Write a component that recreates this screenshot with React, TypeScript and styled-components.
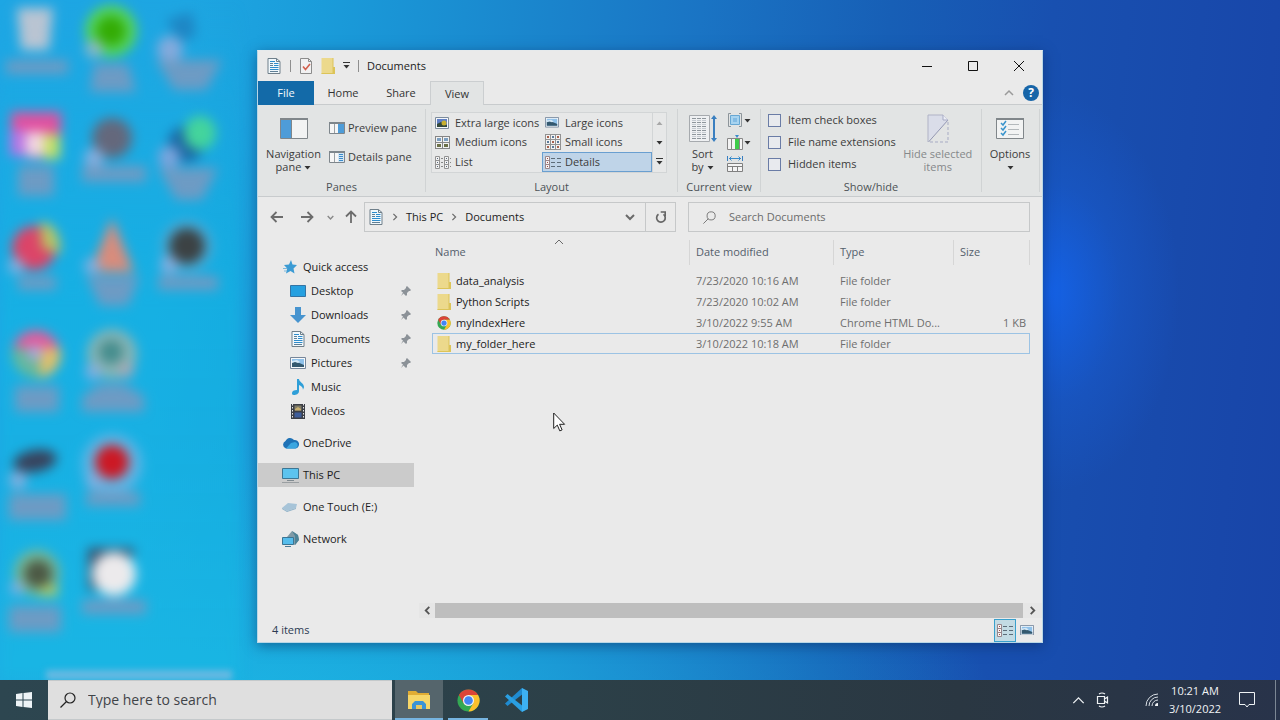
import React from "react";
import styled, { createGlobalStyle } from "styled-components";

const GlobalStyle = createGlobalStyle`
  * { box-sizing: border-box; }
  html, body { margin: 0; padding: 0; }
  body { font-family: "Open Sans", "Noto Sans", sans-serif; font-size: 11px; line-height: 16px; color: #1c1c1c; }
  button, input { font: inherit; color: inherit; margin: 0; padding: 0; border: 0; background: none; }
  svg { display: block; flex: none; }
`;

/* ---------- desktop ---------- */

const Page = styled.div`
  min-height: 100vh;
  display: flex;
  flex-direction: column;
`;

const Desktop = styled.main`
  position: relative;
  flex: 1;
  min-height: 640px;
  overflow: hidden;
  background:
    radial-gradient(ellipse 130px 200px at 82% 43%, rgba(20, 100, 236, 0.9), rgba(24, 96, 220, 0.35) 55%, rgba(28, 104, 232, 0) 100%),
    radial-gradient(ellipse 720px 300px at 22% 108%, rgba(28, 184, 228, 0.9), rgba(28, 184, 228, 0) 100%),
    linear-gradient(96deg, #1ea6e4 0%, #1ea6e2 14%, #1a9cda 24%, #1a88ce 38%, #1a74c4 52%, #175fb6 66%, #1850b0 78%, #1844a8 100%);
`;

const IconGrid = styled.div`
  position: absolute;
  top: 0;
  left: 0;
  bottom: 0;
  width: 240px;
  background: linear-gradient(180deg, rgba(16, 184, 228, 0) 0%, rgba(16, 184, 228, 0.55) 45%, rgba(24, 184, 228, 0.6) 100%);
  display: grid;
  grid-template-columns: repeat(3, 76px);
  grid-template-rows: repeat(6, 108px);
  grid-auto-flow: column;
  filter: blur(6px);
`;

const Strip = styled.div`
  position: absolute;
  left: 46px;
  width: 186px;
  bottom: 0;
  height: 10px;
  background: #66b9e2;
  filter: blur(3px);
`;

const BLUE_GREY = "#6d9bc4";
const BADGE = "#86aede";

function IconCell({ children }: { children?: React.ReactNode }) {
  return (
    <svg width="76" height="108" viewBox="0 0 76 108" aria-hidden="true">
      {children}
    </svg>
  );
}

function DesktopIcons() {
  return (
    <IconGrid>
      <IconCell>
        <path d="M17 8h36l-4 42H21z" fill="#b9c4d2" />
        <rect x="6" y="60" width="62" height="14" fill={BLUE_GREY} />
      </IconCell>
      <IconCell>
        <circle cx="36" cy="28" r="23" fill="#d060a0" />
        <rect x="11" y="4" width="50" height="24" fill="#e050a0" />
        <rect x="10" y="22" width="16" height="26" fill="#b874e4" />
        <rect x="26" y="24" width="20" height="24" fill="#f2d8e0" />
        <rect x="44" y="26" width="16" height="25" fill="#c4e064" />
        <rect x="18" y="58" width="36" height="30" fill={BLUE_GREY} />
      </IconCell>
      <IconCell>
        <circle cx="34" cy="32" r="22" fill="#dc4468" />
        <path d="M40 6c14 0 22 14 20 32l-18-6z" fill="#b8c464" />
        <circle cx="16" cy="50" r="8" fill={BADGE} />
        <rect x="18" y="60" width="38" height="14" fill={BLUE_GREY} />
      </IconCell>
      <IconCell>
        <circle cx="36" cy="30" r="24" fill="#66b89c" />
        <path d="M13 24a24 24 0 0 1 46 0z" fill="#e4589c" />
        <path d="M40 24h20a24 24 0 0 1-20 30z" fill="#e0c068" />
        <circle cx="35" cy="29" r="8" fill="#a8a8d8" />
        <rect x="15" y="62" width="44" height="26" fill={BLUE_GREY} />
      </IconCell>
      <IconCell>
        <ellipse cx="35" cy="29" rx="22" ry="11" fill="#38425c" transform="rotate(-10 35 29)" />
        <circle cx="18" cy="48" r="9" fill={BADGE} />
        <rect x="9" y="62" width="57" height="26" fill={BLUE_GREY} />
      </IconCell>
      <IconCell>
        <circle cx="37" cy="33" r="23" fill="#7ab894" />
        <circle cx="38" cy="34" r="14" fill="#4c5844" />
        <rect x="40" y="46" width="18" height="10" fill="#b0c864" />
        <circle cx="17" cy="48" r="7" fill={BADGE} />
        <rect x="9" y="66" width="52" height="26" fill={BLUE_GREY} />
      </IconCell>

      <IconCell>
        <circle cx="35" cy="31" r="26" fill="#54d45c" />
        <circle cx="35" cy="31" r="15" fill="#34ac04" />
        <circle cx="18" cy="49" r="9" fill="#8cb8c4" />
        <path d="M18 64h34l8 28H14z" fill={BLUE_GREY} />
      </IconCell>
      <IconCell>
        <circle cx="36" cy="30" r="20" fill="#64687c" />
        <circle cx="18" cy="50" r="10" fill={BADGE} />
        <rect x="6" y="58" width="64" height="16" fill={BLUE_GREY} />
      </IconCell>
      <IconCell>
        <path d="M36 2l22 54H14z" fill="#d88c7c" />
        <circle cx="16" cy="50" r="8" fill={BADGE} />
        <path d="M10 60h54l-12 30H24z" fill={BLUE_GREY} />
      </IconCell>
      <IconCell>
        <circle cx="36" cy="30" r="25" fill="#88b4b4" />
        <circle cx="35" cy="28" r="12" fill="#448c8c" />
        <circle cx="50" cy="46" r="8" fill="#a8a8b4" />
        <circle cx="17" cy="48" r="8" fill={BADGE} />
        <path d="M24 60h24l20 12v16H6V72z" fill={BLUE_GREY} />
      </IconCell>
      <IconCell>
        <circle cx="36" cy="32" r="30" fill="#60b4e4" />
        <circle cx="36" cy="30" r="17" fill="#cc1824" />
        <circle cx="18" cy="49" r="8" fill={BADGE} />
        <rect x="10" y="60" width="54" height="14" fill={BLUE_GREY} />
      </IconCell>
      <IconCell>
        <path d="M12 8h46v8H24v34H12z" fill="#38506c" />
        <circle cx="38" cy="34" r="22" fill="#eceaec" />
        <rect x="6" y="60" width="64" height="14" fill={BLUE_GREY} />
      </IconCell>

      <IconCell>
        <path d="M14 20l26-8 4 24-16 6z" fill="#1e86c4" />
        <circle cx="18" cy="49" r="13" fill="#84aadc" />
        <path d="M4 60h66l-16 30H22z" fill={BLUE_GREY} />
      </IconCell>
      <IconCell>
        <circle cx="34" cy="36" r="18" fill="#1c68a4" />
        <ellipse cx="48" cy="25" rx="16" ry="17" fill="#44d49c" />
        <circle cx="17" cy="49" r="11" fill="#7ca4dc" />
        <path d="M6 60h60l-16 32H24z" fill={BLUE_GREY} />
      </IconCell>
      <IconCell>
        <circle cx="35" cy="30" r="26" fill="#4cacd8" />
        <circle cx="35" cy="30" r="18" fill="#3c4244" />
        <circle cx="17" cy="49" r="9" fill={BADGE} />
        <rect x="6" y="60" width="60" height="14" fill={BLUE_GREY} />
      </IconCell>
    </IconGrid>
  );
}

/* ---------- icons ---------- */

const DocIcon = () => (
  <svg width="16" height="16" viewBox="0 0 16 16">
    <path d="M2 .5h8.500l3.500 3v12H2z" fill="#f1f8fc" stroke="#6f7f8a" />
    <path d="M10.500.5v3H14" fill="none" stroke="#6f7f8a" />
    <path d="M4 5.500h3M4 7.500h3M4 13.500h8" stroke="#5f7f96" />
    <path d="M8 5.500h4.500M8 7.500h4.500M4 9.500h8.500M4 11.500h8.500" stroke="#2e8ccc" />
    <path d="M4 3.500h5" stroke="#2e8ccc" />
  </svg>
);

const CheckDoc = () => (
  <svg width="14" height="16" viewBox="0 0 14 16">
    <path d="M1.500.5h8l3 3v12h-11z" fill="#f1f1f2" stroke="#8c8c8c" />
    <path d="M9.500.5v3h3" fill="none" stroke="#8c8c8c" />
    <path d="M4 8.500l2.500 3L11 6" fill="none" stroke="#d2604e" strokeWidth="1.600" />
  </svg>
);

const Folder = () => (
  <svg width="14" height="16" viewBox="0 0 14 16">
    <path d="M.5 0H12v16H.5z" fill="#ecd98c" />
    <path d="M11.500 0h1v9H14v7H.5v-1h11z" fill="#dcc458" />
  </svg>
);

const Chrome = ({ size }: { size: number }) => (
  <svg width={size} height={size} viewBox="0 0 48 48">
    <circle cx="24" cy="24" r="23" fill="#34a853" />
    <path d="M24 1a23 23 0 0 1 20 11.500H24L14 30 4 12.500A23 23 0 0 1 24 1z" fill="#db4437" />
    <path d="M24 12.500h20A23 23 0 0 1 24 47l10-17.300z" fill="#fbc02d" />
    <circle cx="24" cy="24" r="11.500" fill="#f1f1f1" />
    <circle cx="24" cy="24" r="9" fill="#4285f4" />
  </svg>
);

const Picture = ({ size = 16 }: { size?: number }) => (
  <svg width={size} height={size * 0.75} viewBox="0 0 16 12">
    <path d="M.5.5h15v11H.5z" fill="#f6f8fa" stroke="#76869a" />
    <path d="M2 2h12v8H2z" fill="#8fc1ea" />
    <path d="M2 5.500l4-1 8 3.500v2H2z" fill="#34586e" />
    <path d="M2 4l5-1 3 2-2 1-3-1-3 1z" fill="#d4e8f6" />
  </svg>
);

const LargePicture = () => (
  <svg width="14" height="12" viewBox="0 0 14 12">
    <path d="M.5.5h13v11H.5z" fill="#f4f6fa" stroke="#7c8c9c" />
    <path d="M2 2h10v8H2z" fill="#5f7fc4" />
    <path d="M2 7l4-2 6 3v2H2z" fill="#33483c" />
    <circle cx="9" cy="6" r="2.500" fill="#c8b030" />
  </svg>
);

const MediumTiles = () => (
  <svg width="15" height="13" viewBox="0 0 15 13">
    {[0, 7].map((x) =>
      [0, 6].map((y) => (
        <g key={`${x}-${y}`}>
          <rect x={x + 0.5} y={y + 0.5} width="7" height="6" fill="#f2f2f2" stroke="#868686" />
          <rect x={x + 2} y={y + 2} width="4" height="3" fill={y ? "#6c7048" : "#7c9fc0"} />
        </g>
      ))
    )}
  </svg>
);

const SmallTiles = () => (
  <svg width="16" height="16" viewBox="0 0 16 16">
    {[0, 5, 10].map((x) =>
      [0, 5, 10].map((y) => (
        <g key={`${x}-${y}`}>
          <rect x={x + 0.5} y={y + 0.5} width="5" height="5" fill="#f2f2f2" stroke="#929292" />
          <rect x={x + 2} y={y + 2} width="2" height="2" fill={(x + y) % 10 ? "#5b7a99" : "#a8604c"} />
        </g>
      ))
    )}
  </svg>
);

const ListIcon = () => (
  <svg width="16" height="13" viewBox="0 0 16 13">
    {[0, 9].map((x) => (
      <g key={x}>
        <path d={`M${x + 0.5} .5h4v12h-4zM${x} 4.500h5M${x} 8.500h5`} fill="#f2f2f2" stroke="#929292" />
        <path d={`M${x + 2} 2.500h1M${x + 2} 6.500h1M${x + 2} 10.500h1`} stroke="#5b6c80" />
        <path d={`M${x + 6} 2.500h2M${x + 6} 6.500h2M${x + 6} 10.500h2`} stroke="#888" />
      </g>
    ))}
  </svg>
);

const DetailsIcon = () => (
  <svg width="16" height="13" viewBox="0 0 16 13">
    <path d="M.5.5h4v12h-4zM0 4.500h5M0 8.500h5" fill="#f7f3f3" stroke="#98868c" />
    <path d="M2 2.500h1M2 6.500h1M2 10.500h1" stroke="#a04c44" />
    <path d="M6 2.500h4M6 6.500h4M6 10.500h4M12 2.500h4M12 6.500h4M12 10.500h4" stroke="#5c6c78" />
  </svg>
);

const PaneIcon = ({ lines }: { lines?: boolean }) => (
  <svg width="16" height="12" viewBox="0 0 16 12">
    <path d="M.5.5h15v11H.5z" fill="#f6f6f6" stroke="#7e868c" />
    <path d="M0 1h16" stroke="#7e868c" strokeWidth="2" />
    <path d="M5.500 2v9" stroke="#9aa0a4" />
    <path d="M9 2h6v9H9z" fill={lines ? "#d4e6f4" : "#4e9cd8"} />
    {lines && <path d="M10 3.500h4M10 5.500h4M10 7.500h4M10 9.500h4" stroke="#3a8bcb" />}
  </svg>
);

const NavPaneIcon = () => (
  <svg width="28" height="21" viewBox="0 0 28 21">
    <path d="M.5.5h27v20H.5z" fill="#f2f3f3" stroke="#80868a" />
    <path d="M0 1h28" stroke="#80868a" strokeWidth="2" />
    <path d="M1 2h10v18H1z" fill="#4e9cd8" />
    <path d="M11.500 2v18" stroke="#80868a" />
  </svg>
);

const SortIcon = () => (
  <svg width="28" height="29" viewBox="0 0 28 29">
    <path d="M.5 1.500h20v26H.5z" fill="#eef0f2" stroke="#a6aaae" />
    <path d="M3 4.500h15M3 8.500h15M3 12.500h15M3 16.500h15M3 20.500h15M3 24.500h15" stroke="#8e969c" strokeDasharray="4 1" />
    <path d="M3 6.500h15M3 10.500h15M3 14.500h15M3 18.500h15M3 22.500h15" stroke="#c4cad0" strokeDasharray="4 1" />
    <path d="M25 3v23" stroke="#3a7fc0" strokeWidth="2" />
    <path d="M22 5l3-4 3 4zM22 24l3 4 3-4z" fill="#3a7fc0" />
  </svg>
);

const GroupByIcon = () => (
  <svg width="16" height="14" viewBox="0 0 16 14">
    <path d="M4 .5H1.500v13H4M12 .5h2.500v13H12" fill="none" stroke="#8d959a" />
    <path d="M3.500 2.500h9v9h-9z" fill="#a8d4f0" stroke="#68a8d4" />
    <path d="M6 5h4v4H6z" fill="#84bce4" />
  </svg>
);

const AddColumnIcon = () => (
  <svg width="16" height="15" viewBox="0 0 16 15">
    <path d="M.5 3.500h15v11H.5z" fill="#f4f4f4" stroke="#888" />
    <path d="M4.500 4v10M12.500 4v10" stroke="#888" />
    <path d="M8 4h4v10H8z" fill="#3ecb4a" />
    <path d="M8 0h4l-2 3z" fill="#3a8bcb" />
  </svg>
);

const SizeColumnsIcon = () => (
  <svg width="16" height="16" viewBox="0 0 16 16">
    <path d="M.5 0v5M15.500 0v5" stroke="#3a7fc0" />
    <path d="M2 2.500h12M4.500.5l-2 2 2 2M11.500.5l2 2-2 2" fill="none" stroke="#3a8bcb" />
    <path d="M.5 7.500h15v8H.5zM0 10.500h16M5.500 10v5M10.500 10v5" fill="#f4f4f4" stroke="#808080" />
  </svg>
);

const HideIcon = () => (
  <svg width="22" height="29" viewBox="0 0 22 29">
    <path d="M1 1h15l5 5L1 27z" fill="#dadde9" />
    <path d="M21 6L1.500 28" stroke="#9296b4" />
    <path d="M1 28V1h15l5 5" fill="none" stroke="#b0b3c6" />
    <path d="M16 1v5h5" fill="#eceef6" stroke="#a7abc4" />
    <path d="M21 8v20H2" fill="none" stroke="#a7abc4" strokeDasharray="3 2" />
  </svg>
);

const OptionsIcon = () => (
  <svg width="28" height="21" viewBox="0 0 28 21">
    <path d="M.5.5h27v20H.5z" fill="#f2f3f3" stroke="#80868a" />
    <path d="M0 1h28" stroke="#80868a" strokeWidth="2" />
    <path d="M5 5l2 2 3-4M5 10l2 2 3-4M5 15l2 2 3-4" fill="none" stroke="#3a94cc" strokeWidth="1.500" />
    <path d="M12 6.500h11M12 11.500h11M12 16.500h11" stroke="#b4b9bc" />
  </svg>
);

const Caret = ({ light, bar }: { light?: boolean; bar?: boolean }) => (
  <svg width="7" height="8" viewBox="0 0 7 8">
    {bar && <path d="M0 .5h7" stroke="#333" />}
    <path d="M.5 3h6l-3 3.500z" fill={light ? "#a8a8a8" : "#333"} transform={light ? "rotate(180 3.500 4.500)" : undefined} />
  </svg>
);

type ChevronProps = { dir: "up" | "down" | "left" | "right"; size?: number; color?: string; weight?: number };

const Chevron = ({ dir, size = 8, color = "#6a6a6a", weight = 1.5 }: ChevronProps) => {
  const paths = { up: "M1 7l4-4 4 4", down: "M1 3l4 4 4-4", left: "M7 1L3 5l4 4", right: "M3 1l4 4-4 4" };
  return (
    <svg width={size} height={size} viewBox="0 0 10 10">
      <path d={paths[dir]} fill="none" stroke={color} strokeWidth={weight} />
    </svg>
  );
};

const Arrow = ({ dir }: { dir: "left" | "right" | "up" }) => {
  const paths = { left: "M13 7H1.500M6.500 2l-5 5 5 5", right: "M1 7h11.500M7.500 2l5 5-5 5", up: "M7 13V1.500M2 6.500l5-5 5 5" };
  return (
    <svg width="14" height="14" viewBox="0 0 14 14">
      <path d={paths[dir]} fill="none" stroke="#6c6c6c" strokeWidth="1.800" />
    </svg>
  );
};

const Refresh = () => (
  <svg width="12" height="13" viewBox="0 0 12 13">
    <path d="M8.500 3.400A4.300 4.300 0 1 1 3.500 3.300" fill="none" stroke="#666" strokeWidth="1.700" />
    <path d="M10.500.8H6v4.500" fill="none" stroke="#666" strokeWidth="1.600" transform="rotate(90 8 3)" />
  </svg>
);

const Magnifier = ({ size, color }: { size: number; color: string }) => (
  <svg width={size} height={size} viewBox="0 0 16 16">
    <circle cx="10" cy="6" r="5" fill="none" stroke={color} strokeWidth="1.200" />
    <path d="M6.500 9.500L.5 15.500" stroke={color} strokeWidth="1.200" />
  </svg>
);

const Star = () => (
  <svg width="14" height="14" viewBox="0 0 14 14">
    <path d="M8 0l1.500 4.500 4.500.5-3.500 3.500 1 5L7.500 11 3 13.500l1.200-5L1 5l5-.5z" fill="#3b9bd4" />
    <path d="M0 8.500h4M1 11h3" stroke="#7ab8dc" />
  </svg>
);

const DesktopIcon = () => (
  <svg width="16" height="12" viewBox="0 0 16 12">
    <path d="M.5.5h15v11H.5z" fill="#26a0e0" stroke="#3474a4" />
  </svg>
);

const DownloadIcon = () => (
  <svg width="16" height="16" viewBox="0 0 16 16">
    <path d="M5 0h6v8h5l-8 8-8-8h5z" fill="#4794cf" />
  </svg>
);

const MusicIcon = () => (
  <svg width="12" height="16" viewBox="0 0 12 16">
    <path d="M5 0h2c0 3 5 4 5 8 0 1-1 2-1 3 0-3-2-4-4-5v6c0 3-3 4-5 4s-2-1-2-2c0-2 2-3 5-3z" fill="#2f9fd8" />
  </svg>
);

const VideoIcon = () => (
  <svg width="14" height="15" viewBox="0 0 14 15">
    <path d="M0 0h14v15H0z" fill="#3c3f46" />
    <path d="M1.500 0v15M12.500 0v15" stroke="#e6e6e6" strokeDasharray="1.500 1.500" />
    <path d="M3.500 1.500h7v5h-7z" fill="#807c68" />
    <path d="M3.500 8.500h7v5h-7z" fill="#3e5d9a" />
    <path d="M4 5l3-2 3 2v1.500H4z" fill="#c8b070" />
  </svg>
);

const CloudIcon = () => (
  <svg width="17" height="12" viewBox="0 0 17 12">
    <path d="M4 11.500a4 4 0 0 1-.5-7.500A5 5 0 0 1 12 3a4 4 0 0 1 1.500 8.500z" fill="#1f72b6" />
    <path d="M4 11.500L9 6l4-1a3.400 3.400 0 0 1 .5 6.500z" fill="#3ba6e0" />
  </svg>
);

const PcIcon = () => (
  <svg width="17" height="15" viewBox="0 0 17 15">
    <path d="M.5.5h16v10H.5z" fill="#5cc3ee" stroke="#3c7694" />
    <path d="M5 12.500h7" stroke="#7f8a90" />
    <path d="M0 14.500h17" stroke="#9a9fa2" />
  </svg>
);

const DriveIcon = () => (
  <svg width="16" height="9" viewBox="0 0 16 9">
    <path d="M6 0l9 1-1 4-9 3-5-3z" fill="#a7c4d8" />
    <path d="M0 5l5 3 9-3v1L5 9 0 6z" fill="#8fb2c8" />
  </svg>
);

const NetworkIcon = () => (
  <svg width="17" height="16" viewBox="0 0 17 16">
    <path d="M10 0l6 4 1 5-4 5-6-2-2-6z" fill="#7f9aa6" />
    <path d="M10 0l3 5v9l4-5-1-5z" fill="#4c8296" />
    <path d="M.5 6.500h11v7H.5z" fill="#56bdec" stroke="#3a7594" />
    <path d="M3 15.500h6" stroke="#4c7a94" />
  </svg>
);

const Pin = () => (
  <svg width="10" height="10" viewBox="0 0 10 10">
    <path d="M6 0l4 4-1 1-1 0-2 2 0 2-1 1-2.500-2.500L0 10l2-3.500L0 5l1-1h2l2-2V1z" fill="#8c9298" />
  </svg>
);

/* ---------- explorer window ---------- */

const Window = styled.section`
  position: absolute;
  top: 50px;
  right: 237px;
  bottom: 37px;
  left: 257px;
  display: flex;
  flex-direction: column;
  background: #eaeaea;
  border: 1px solid #b9d7e6;
  border-top-color: #e6eaec;
  box-shadow: 0 3px 12px rgba(10, 40, 90, 0.5);
`;

const TitleBar = styled.header`
  height: 30px;
  display: flex;
  align-items: center;
  padding-left: 8px;
`;

const QuickTools = styled.div`
  display: flex;
  align-items: center;
  gap: 8px;
  margin-right: 8px;
`;

const Divider = styled.span`
  width: 1px;
  height: 12px;
  background: #8e8e8e;
`;

const IconButton = styled.button`
  display: flex;
  align-items: center;
  justify-content: center;
`;

const WindowTitle = styled.h1`
  margin: 0;
  flex: 1;
  font-size: 11px;
  font-weight: 400;
`;

const CaptionButton = styled.button`
  width: 46px;
  height: 30px;
  display: flex;
  align-items: center;
  justify-content: center;
`;

const Tabs = styled.nav`
  height: 24px;
  display: flex;
  border-bottom: 1px solid #c8cbcd;
`;

const Tab = styled.button<{ $kind?: "file" | "active" }>`
  width: ${(p) => (p.$kind === "file" ? 56 : p.$kind === "active" ? 54 : 58)}px;
  height: 24px;
  color: ${(p) => (p.$kind === "file" ? "#f4f8fc" : "#333")};
  background: ${(p) => (p.$kind === "file" ? "#136aa8" : p.$kind === "active" ? "#e2e4e4" : "transparent")};
  border: 1px solid ${(p) => (p.$kind === "active" ? "#cbced0" : "transparent")};
  border-width: ${(p) => (p.$kind === "active" ? "1px 1px 0" : "0")};
`;

const TabsEnd = styled.div`
  margin-left: auto;
  display: flex;
  align-items: center;
  gap: 9px;
  padding-right: 3px;
`;

const HelpButton = styled.button`
  width: 16px;
  height: 16px;
  border-radius: 50%;
  background: #1765a8;
  color: #fff;
  font-size: 12px;
  font-weight: 700;
  line-height: 16px;
`;

const Ribbon = styled.div`
  height: 92px;
  display: flex;
  padding: 4px 2px 4px 0;
  background: #e2e4e4;
  border-bottom: 1px solid #c8cbcd;
`;

const Group = styled.section<{ $width: number; $grow?: boolean }>`
  flex: ${(p) => (p.$grow ? "1 1" : "0 0")} ${(p) => p.$width}px;
  min-width: 0;
  display: flex;
  flex-direction: column;
  border-right: 1px solid #d0d3d4;
`;

const GroupBody = styled.div<{ $pad?: number }>`
  flex: 1;
  display: flex;
  padding: 0 0 0 ${(p) => p.$pad ?? 0}px;
`;

const GroupLabel = styled.h2`
  margin: 0;
  height: 13px;
  font-size: 11px;
  font-weight: 400;
  text-align: center;
  color: #4c5256;
`;

const BigButton = styled.button<{ $width: number; $muted?: boolean }>`
  width: ${(p) => p.$width}px;
  height: 67px;
  display: flex;
  flex-direction: column;
  align-items: center;
  line-height: 13px;
  color: ${(p) => (p.$muted ? "#85888a" : "#3c3c3c")};
  white-space: nowrap;
`;

const BigIcon = styled.span`
  height: 38px;
  display: flex;
  align-items: center;
`;

const BigText = styled.span`
  display: flex;
  align-items: center;
  gap: 3px;
  min-height: 13px;
`;

const PaneList = styled.div`
  display: flex;
  flex-direction: column;
  gap: 13px;
  padding-top: 11px;
`;

const LabelledButton = styled.button`
  display: flex;
  align-items: center;
  gap: 3px;
  height: 16px;
  color: #3c3c3c;
  white-space: nowrap;
`;

const Gallery = styled.div`
  display: flex;
  height: 61px;
  margin-top: 3px;
  border: 1px solid #d2d5d6;
  background: #e7e8e8;
`;

const GalleryGrid = styled.div`
  display: grid;
  grid-template-columns: 110px 110px;
  grid-template-rows: 19px 20px 20px;
`;

const GalleryItem = styled.button<{ $selected?: boolean }>`
  display: flex;
  align-items: center;
  padding-left: 3px;
  color: #3c3c3c;
  white-space: nowrap;
  ${(p) => p.$selected && "background: #bfd4e8; box-shadow: inset 0 0 0 1px #6a9fd0;"}
`;

const GalleryIcon = styled.span`
  flex: 0 0 20px;
  display: flex;
`;

const GalleryScroll = styled.div`
  width: 14px;
  display: grid;
  grid-template-rows: 19px 20px 20px;
  border-left: 1px solid #d2d5d6;
`;

const ToolColumn = styled.div`
  display: flex;
  flex-direction: column;
  gap: 6px;
  padding-top: 3px;
`;

const ToolButton = styled.button`
  display: flex;
  align-items: center;
  gap: 1px;
  height: 16px;
`;

const CheckLabel = styled.label`
  display: flex;
  align-items: center;
  gap: 7px;
  height: 16px;
  color: #3c3c3c;
  white-space: nowrap;
`;

const CheckInput = styled.input`
  appearance: none;
  width: 13px;
  height: 13px;
  border: 1px solid #6a7ca6;
  background: #e8eaee;
`;

const NavBar = styled.div`
  display: flex;
  align-items: center;
  height: 40px;
  padding: 0 12px 0 4px;
`;

const NavButtons = styled.div`
  display: grid;
  grid-template-columns: 30px 30px 16px 26px;
`;

const Breadcrumb = styled.div`
  flex: 1;
  display: flex;
  align-items: center;
  height: 30px;
  border: 1px solid #c6c8c9;
  padding-left: 3px;
`;

const Crumb = styled.a`
  color: #222;
  text-decoration: none;
  white-space: nowrap;
`;

const CrumbSep = styled.span`
  width: 22px;
  display: flex;
  justify-content: center;
`;

const EdgeButton = styled.button<{ $first?: boolean }>`
  width: 30px;
  height: 28px;
  display: flex;
  align-items: center;
  justify-content: center;
  margin-left: ${(p) => (p.$first ? "auto" : "0")};
  border-left: ${(p) => (p.$first ? "0" : "1px solid #c6c8c9")};
`;

const SearchBox = styled.label`
  width: 342px;
  height: 30px;
  margin-left: 12px;
  display: flex;
  align-items: center;
  gap: 13px;
  padding-left: 14px;
  border: 1px solid #c6c8c9;
`;

const SearchInput = styled.input`
  flex: 1;
  min-width: 0;
  outline: none;
  &::placeholder { color: #6c6c6c; opacity: 1; }
`;

const Body = styled.div`
  flex: 1;
  min-height: 0;
  display: flex;
`;

const Sidebar = styled.nav`
  width: 161px;
  padding: 18px 5px 0 0;
  display: flex;
  flex-direction: column;
  gap: 8px;
`;

const SideLink = styled.a<{ $nested?: boolean; $current?: boolean }>`
  display: flex;
  align-items: center;
  height: 24px;
  padding: 0 3px 0 ${(p) => (p.$nested ? 31 : 23)}px;
  color: #1c1c1c;
  text-decoration: none;
  white-space: nowrap;
  background: ${(p) => (p.$current ? "#cbcbcb" : "transparent")};
`;

const SideIcon = styled.span`
  width: 18px;
  margin-right: 4px;
  display: flex;
  justify-content: center;
`;

const SideText = styled.span`
  flex: 1;
`;

const Content = styled.div`
  flex: 1;
  min-width: 0;
  display: flex;
  flex-direction: column;
`;

const TableArea = styled.div`
  flex: 1;
  padding: 0 12px 0 13px;
`;

const FileTable = styled.table`
  width: 100%;
  table-layout: fixed;
  border-collapse: separate;
  border-spacing: 0;
`;

const HeadCell = styled.th<{ $width?: number }>`
  ${(p) => p.$width && `width: ${p.$width}px;`}
  height: 33px;
  padding: 2px 0 0 6px;
  font-weight: 400;
  text-align: left;
  vertical-align: top;
  color: #54606c;
  background: linear-gradient(#d6d6d6, #d6d6d6) right 3px / 1px 25px no-repeat;
  &:first-child { padding-left: 3px; padding-right: 8px; }
`;

const HeadInner = styled.span`
  display: grid;
  grid-template-rows: 6px 14px;
  align-items: center;
`;

const SortMark = styled.span`
  display: flex;
  justify-content: center;
`;

const FileRow = styled.tr<{ $selected?: boolean }>`
  ${(p) => p.$selected && "outline: 1px solid #9cc3e4; outline-offset: -1px;"}
`;

const Cell = styled.td<{ $align?: "right" }>`
  height: 21px;
  padding: 0 ${(p) => (p.$align ? 4 : 0)}px 0 6px;
  color: #6e6e6e;
  text-align: ${(p) => p.$align ?? "left"};
  white-space: nowrap;
  overflow: hidden;
  text-overflow: ellipsis;
  &:first-child { padding-left: 5px; }
`;

const NameCell = styled.div`
  display: flex;
  align-items: center;
  gap: 5px;
  color: #1c1c1c;
`;

const ScrollBar = styled.div`
  height: 15px;
  display: flex;
  align-items: center;
`;

const ScrollArrow = styled.button<{ $wide?: boolean }>`
  width: ${(p) => (p.$wide ? 19 : 16)}px;
  height: 15px;
  display: flex;
  align-items: center;
  justify-content: center;
  background: #e6e6e6;
`;

const ScrollThumb = styled.div`
  flex: 1;
  height: 15px;
  background: #bebebe;
`;

const StatusBar = styled.footer`
  height: 24px;
  display: flex;
  align-items: center;
  padding: 0 4px 0 14px;
  color: #2c3a52;
`;

const StatusText = styled.span`
  flex: 1;
`;

const ViewButton = styled.button<{ $active?: boolean }>`
  width: 22px;
  height: 23px;
  display: flex;
  align-items: center;
  justify-content: center;
  background: ${(p) => (p.$active ? "#c3dbe4" : "transparent")};
  border: ${(p) => (p.$active ? "1px solid #39a0cc" : "0")};
`;

const Pointer = styled.svg`
  position: absolute;
  left: 553px;
  top: 412px;
`;

/* ---------- taskbar ---------- */

const Taskbar = styled.footer`
  height: 40px;
  display: flex;
  background: linear-gradient(90deg, #2d4650 0%, #2c4048 45%, #2a3742 75%, #28334a 100%);
  color: #f0f3f5;
`;

const StartButton = styled.button`
  width: 48px;
  display: flex;
  align-items: center;
  justify-content: center;
`;

const TaskSearch = styled.label`
  width: 344px;
  display: flex;
  align-items: center;
  gap: 12px;
  padding-left: 12px;
  margin-right: 3px;
  background: #dfdfdf;
  border: 1px solid #c4c9cb;
  border-width: 1px 0;
`;

const TaskInput = styled.input`
  flex: 1;
  min-width: 0;
  font-size: 14px;
  color: #333;
  outline: none;
  &::placeholder { color: #3f4448; opacity: 1; }
`;

const TaskButton = styled.button<{ $active?: boolean; $open?: boolean }>`
  width: 48px;
  margin-right: 1px;
  display: flex;
  align-items: center;
  justify-content: center;
  background:
    linear-gradient(#76b4e0, #76b4e0) center bottom / ${(p) => (p.$active ? "48px" : p.$open ? "40px" : "0")} 2px no-repeat,
    ${(p) => (p.$active ? "#55656c" : "transparent")};
`;

const Tray = styled.div`
  margin-left: auto;
  display: flex;
  align-items: center;
`;

const TrayButton = styled.button<{ $width: number; $after?: number }>`
  width: ${(p) => p.$width}px;
  height: 40px;
  margin-right: ${(p) => p.$after ?? 0}px;
  display: flex;
  align-items: center;
  justify-content: center;
`;

const Clock = styled.time`
  width: 58px;
  text-align: center;
  line-height: 18px;
  white-space: nowrap;
`;

const ShowDesktop = styled.button`
  width: 5px;
  height: 40px;
  border-left: 1px solid #7c8794;
`;

/* ---------- data ---------- */

const galleryItems = [
  { label: "Extra large icons", icon: <LargePicture /> },
  { label: "Large icons", icon: <Picture size={14} /> },
  { label: "Medium icons", icon: <MediumTiles /> },
  { label: "Small icons", icon: <SmallTiles /> },
  { label: "List", icon: <ListIcon /> },
  { label: "Details", icon: <DetailsIcon />, selected: true },
];

const quickLinks = [
  { label: "Desktop", icon: <DesktopIcon />, pinned: true },
  { label: "Downloads", icon: <DownloadIcon />, pinned: true },
  { label: "Documents", icon: <DocIcon />, pinned: true },
  { label: "Pictures", icon: <Picture />, pinned: true },
  { label: "Music", icon: <MusicIcon /> },
  { label: "Videos", icon: <VideoIcon /> },
];

const places = [
  { label: "OneDrive", icon: <CloudIcon /> },
  { label: "This PC", icon: <PcIcon />, current: true },
  { label: "One Touch (E:)", icon: <DriveIcon /> },
  { label: "Network", icon: <NetworkIcon /> },
];

const files = [
  { name: "data_analysis", date: "7/23/2020 10:16 AM", type: "File folder", size: "" },
  { name: "Python Scripts", date: "7/23/2020 10:02 AM", type: "File folder", size: "" },
  { name: "myIndexHere", date: "3/10/2022 9:55 AM", type: "Chrome HTML Do...", size: "1 KB", chrome: true },
  { name: "my_folder_here", date: "3/10/2022 10:18 AM", type: "File folder", size: "", selected: true },
];

function RibbonBar() {
  return (
    <Ribbon>
      <Group $width={168}>
        <GroupBody>
          <BigButton $width={71}>
            <BigIcon><NavPaneIcon /></BigIcon>
            <BigText>Navigation</BigText>
            <BigText>pane <Caret /></BigText>
          </BigButton>
          <PaneList>
            <LabelledButton><PaneIcon /> Preview pane</LabelledButton>
            <LabelledButton><PaneIcon lines /> Details pane</LabelledButton>
          </PaneList>
        </GroupBody>
        <GroupLabel>Panes</GroupLabel>
      </Group>
      <Group $width={252}>
        <GroupBody $pad={5}>
          <Gallery>
            <GalleryGrid>
              {galleryItems.map((g) => (
                <GalleryItem key={g.label} $selected={g.selected}>
                  <GalleryIcon>{g.icon}</GalleryIcon>
                  {g.label}
                </GalleryItem>
              ))}
            </GalleryGrid>
            <GalleryScroll>
              <IconButton aria-label="Scroll up"><Caret light /></IconButton>
              <IconButton aria-label="Scroll down"><Caret /></IconButton>
              <IconButton aria-label="More layouts"><Caret bar /></IconButton>
            </GalleryScroll>
          </Gallery>
        </GroupBody>
        <GroupLabel>Layout</GroupLabel>
      </Group>
      <Group $width={83}>
        <GroupBody>
          <BigButton $width={49}>
            <BigIcon><SortIcon /></BigIcon>
            <BigText>Sort</BigText>
            <BigText>by <Caret /></BigText>
          </BigButton>
          <ToolColumn>
            <ToolButton aria-label="Group by"><GroupByIcon /><Caret /></ToolButton>
            <ToolButton aria-label="Add columns"><AddColumnIcon /><Caret /></ToolButton>
            <ToolButton aria-label="Size all columns to fit"><SizeColumnsIcon /></ToolButton>
          </ToolColumn>
        </GroupBody>
        <GroupLabel>Current view</GroupLabel>
      </Group>
      <Group $width={221} $grow>
        <GroupBody $pad={7}>
          <ToolColumn>
            {["Item check boxes", "File name extensions", "Hidden items"].map((t) => (
              <CheckLabel key={t}><CheckInput type="checkbox" />{t}</CheckLabel>
            ))}
          </ToolColumn>
          <BigButton $width={84} $muted>
            <BigIcon><HideIcon /></BigIcon>
            <BigText>Hide selected</BigText>
            <BigText>items</BigText>
          </BigButton>
        </GroupBody>
        <GroupLabel>Show/hide</GroupLabel>
      </Group>
      <Group $width={58}>
        <GroupBody>
          <BigButton $width={56}>
            <BigIcon><OptionsIcon /></BigIcon>
            <BigText>Options</BigText>
            <BigText><Caret /></BigText>
          </BigButton>
        </GroupBody>
      </Group>
    </Ribbon>
  );
}

function Explorer() {
  return (
    <Window aria-label="Documents">
      <TitleBar>
        <QuickTools>
          <DocIcon />
          <Divider />
          <IconButton aria-label="Properties"><CheckDoc /></IconButton>
          <IconButton aria-label="New folder"><Folder /></IconButton>
          <IconButton aria-label="Customize toolbar"><Caret bar /></IconButton>
          <Divider />
        </QuickTools>
        <WindowTitle>Documents</WindowTitle>
        <CaptionButton aria-label="Minimize">
          <svg width="10" height="10" viewBox="0 0 10 10"><path d="M0 5.500h10" stroke="#111" /></svg>
        </CaptionButton>
        <CaptionButton aria-label="Maximize">
          <svg width="10" height="10" viewBox="0 0 10 10"><path d="M.5.5h9v9h-9z" fill="none" stroke="#111" /></svg>
        </CaptionButton>
        <CaptionButton aria-label="Close">
          <svg width="10" height="10" viewBox="0 0 10 10"><path d="M0 0l10 10M10 0L0 10" stroke="#111" /></svg>
        </CaptionButton>
      </TitleBar>
      <Tabs>
        <Tab $kind="file">File</Tab>
        <Tab>Home</Tab>
        <Tab>Share</Tab>
        <Tab $kind="active">View</Tab>
        <TabsEnd>
          <IconButton aria-label="Collapse ribbon"><Chevron dir="up" size={10} color="#9a9a9a" /></IconButton>
          <HelpButton>?</HelpButton>
        </TabsEnd>
      </Tabs>
      <RibbonBar />
      <NavBar>
        <NavButtons>
          <IconButton aria-label="Back"><Arrow dir="left" /></IconButton>
          <IconButton aria-label="Forward"><Arrow dir="right" /></IconButton>
          <IconButton aria-label="Recent"><Chevron dir="down" size={7} color="#888" weight={2} /></IconButton>
          <IconButton aria-label="Up"><Arrow dir="up" /></IconButton>
        </NavButtons>
        <Breadcrumb>
          <DocIcon />
          <CrumbSep><Chevron dir="right" /></CrumbSep>
          <Crumb href="#pc">This PC</Crumb>
          <CrumbSep><Chevron dir="right" /></CrumbSep>
          <Crumb href="#documents">Documents</Crumb>
          <EdgeButton $first aria-label="Previous locations"><Chevron dir="down" size={10} weight={2} /></EdgeButton>
          <EdgeButton aria-label="Refresh"><Refresh /></EdgeButton>
        </Breadcrumb>
        <SearchBox>
          <Magnifier size={13} color="#777" />
          <SearchInput type="text" placeholder="Search Documents" aria-label="Search Documents" />
        </SearchBox>
      </NavBar>
      <Body>
        <Sidebar>
          <div>
            <SideLink href="#quick"><SideIcon><Star /></SideIcon>Quick access</SideLink>
            {quickLinks.map((l) => (
              <SideLink key={l.label} href={`#${l.label}`} $nested>
                <SideIcon>{l.icon}</SideIcon>
                <SideText>{l.label}</SideText>
                {l.pinned && <Pin />}
              </SideLink>
            ))}
          </div>
          {places.map((l) => (
            <SideLink key={l.label} href={`#${l.label}`} $current={l.current}>
              <SideIcon>{l.icon}</SideIcon>
              {l.label}
            </SideLink>
          ))}
        </Sidebar>
        <Content>
          <TableArea>
            <FileTable>
              <thead>
                <tr>
                  <HeadCell>
                    <HeadInner>
                      <SortMark><Chevron dir="up" size={10} weight={1} /></SortMark>
                      Name
                    </HeadInner>
                  </HeadCell>
                  <HeadCell $width={144}><HeadInner><i />Date modified</HeadInner></HeadCell>
                  <HeadCell $width={120}><HeadInner><i />Type</HeadInner></HeadCell>
                  <HeadCell $width={76}><HeadInner><i />Size</HeadInner></HeadCell>
                </tr>
              </thead>
              <tbody>
                {files.map((f) => (
                  <FileRow key={f.name} $selected={f.selected}>
                    <Cell>
                      <NameCell>{f.chrome ? <Chrome size={14} /> : <Folder />}{f.name}</NameCell>
                    </Cell>
                    <Cell>{f.date}</Cell>
                    <Cell>{f.type}</Cell>
                    <Cell $align="right">{f.size}</Cell>
                  </FileRow>
                ))}
              </tbody>
            </FileTable>
          </TableArea>
          <ScrollBar>
            <ScrollArrow aria-label="Scroll left"><Chevron dir="left" size={9} color="#555" weight={2} /></ScrollArrow>
            <ScrollThumb />
            <ScrollArrow $wide aria-label="Scroll right"><Chevron dir="right" size={9} color="#555" weight={2} /></ScrollArrow>
          </ScrollBar>
        </Content>
      </Body>
      <StatusBar>
        <StatusText>4 items</StatusText>
        <ViewButton $active aria-label="Details view"><DetailsIcon /></ViewButton>
        <ViewButton aria-label="Large icons view"><Picture size={14} /></ViewButton>
      </StatusBar>
    </Window>
  );
}

export default function App() {
  return (
    <>
      <GlobalStyle />
      <Page>
        <Desktop>
          <DesktopIcons />
          <Strip />
          <Explorer />
          <Pointer width="13" height="20" viewBox="0 0 13 20">
            <path d="M.7 1v15.500l3.600-3.400 2.500 5.800 2.300-1-2.500-5.600h5z" fill="#fff" stroke="#222" />
          </Pointer>
        </Desktop>
        <Taskbar>
          <StartButton aria-label="Start">
            <svg width="16" height="16" viewBox="0 0 16 16">
              <path d="M0 2l6.500-1v6.500H0zM7.500.9L16 0v7.500H7.500zM0 8.500h6.500V15L0 14zM7.500 8.500H16V16l-8.500-1z" fill="#eef4f7" />
            </svg>
          </StartButton>
          <TaskSearch>
            <Magnifier size={16} color="#222" />
            <TaskInput type="text" placeholder="Type here to search" aria-label="Type here to search" />
          </TaskSearch>
          <TaskButton $active aria-label="File Explorer">
            <svg width="22" height="20" viewBox="0 0 22 20">
              <path d="M0 1h8l2 2h11v15H0z" fill="#e0ac34" />
              <path d="M0 5h22v14H0z" fill="#f6d668" />
              <path d="M4 19v-5l3-3h8l3 3v5h-4v-4H8v4z" fill="#3b93d4" />
              <path d="M8 15h6v4H8z" fill="#e8c860" />
            </svg>
          </TaskButton>
          <TaskButton $open aria-label="Chrome"><Chrome size={23} /></TaskButton>
          <TaskButton aria-label="Visual Studio Code">
            <svg width="24" height="24" viewBox="0 0 24 24">
              <path d="M17 0L0 15.500l2.500 2.500L19 5z" fill="#1f8bd0" />
              <path d="M17 24L0 8.500 2.500 6 19 19z" fill="#2a9fe2" />
              <path d="M17 0l6 3v18l-6 3z" fill="#3db1f2" />
            </svg>
          </TaskButton>
          <Tray>
            <TrayButton $width={26} aria-label="Show hidden icons"><Chevron dir="up" size={13} color="#eef2f4" weight={1} /></TrayButton>
            <TrayButton $width={24} $after={23} aria-label="Meet now">
              <svg width="14" height="16" viewBox="0 0 14 16">
                <path d="M1.500 4.500h7v7h-7zM8.500 7l3-2v6l-3-2M3 2Q6 0 9 2M3 14q3 2 6 0" fill="none" stroke="#eef2f4" strokeWidth="1.200" />
              </svg>
            </TrayButton>
            <TrayButton $width={28} aria-label="Network status">
              <svg width="14" height="14" viewBox="0 0 14 14">
                <path d="M1 13A12 12 0 0 1 13 1M4 13a9 9 0 0 1 9-9M7 13a6 6 0 0 1 6-6" fill="none" stroke="#d8dee4" />
                <path d="M10 13a3 3 0 0 1 3-3v3z" fill="#f2f4f6" />
              </svg>
            </TrayButton>
            <Clock>10:21 AM<br />3/10/2022</Clock>
            <TrayButton $width={46} $after={5} aria-label="Notifications">
              <svg width="16" height="16" viewBox="0 0 16 16">
                <path d="M.5.5h15v12H10L8 15l-2-2.500H.5z" fill="none" stroke="#eef2f4" />
              </svg>
            </TrayButton>
            <ShowDesktop aria-label="Show desktop" />
          </Tray>
        </Taskbar>
      </Page>
    </>
  );
}
